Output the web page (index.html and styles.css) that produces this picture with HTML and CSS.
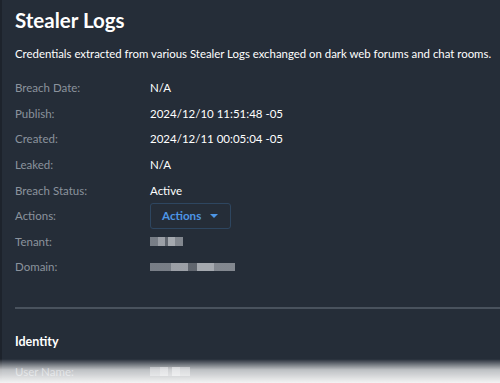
FILE: index.html
```html
<!DOCTYPE html>
<html lang="en">
<head>
    <meta charset="UTF-8">
    <meta name="viewport" content="width=device-width, initial-scale=1.0">
    <title>Stealer Logs</title>
    <link rel="stylesheet" href="styles.css">
</head>
<body>
    <div class="panel">
        <h1>Stealer Logs</h1>
        <p class="desc">Credentials extracted from various Stealer Logs exchanged on dark web forums and chat rooms.</p>

        <div class="fields">
            <span class="label">Breach Date:</span><span class="value">N/A</span>
            <span class="label">Publish:</span><span class="value">2024/12/10 11:51:48 -05</span>
            <span class="label">Created:</span><span class="value">2024/12/11 00:05:04 -05</span>
            <span class="label">Leaked:</span><span class="value">N/A</span>
            <span class="label">Breach Status:</span><span class="value">Active</span>
            <span class="label">Actions:</span>
            <span class="value"><button class="actions">Actions <span class="caret"></span></button></span>
            <span class="label">Tenant:</span><span class="value"><span class="blur tenant"></span></span>
            <span class="label">Domain:</span><span class="value"><span class="blur domain"></span></span>
        </div>

        <hr class="divider">

        <h2>Identity</h2>
        <div class="fields">
            <span class="label">User Name:</span><span class="value"><span class="blur user"></span></span>
        </div>
    </div>
    <div class="fade"></div>
</body>
</html>
```

FILE: styles.css
```css
body {
    margin: 0;
    background-color: #252d38;
    font-family: Lato, "Open Sans", sans-serif;
    color: #ffffff;
    height: 383px;
    overflow: hidden;
    border-left: 2px solid #1d232c;
}

.panel {
    padding: 7px 0 0 13px;
}

h1 {
    margin: 0;
    font-size: 20.5px;
    font-weight: 700;
    line-height: 26px;
}

.desc {
    margin: 13px 0 13px 0;
    font-size: 11.4px;
    line-height: 16px;
}

.fields {
    display: grid;
    grid-template-columns: 135px 1fr;
    grid-auto-rows: 25.6px;
    align-items: center;
    font-size: 11.5px;
}

.label {
    color: #8b939d;
}

.value {
    display: flex;
    align-items: center;
}

.actions {
    display: flex;
    align-items: center;
    gap: 9px;
    height: 26px;
    padding: 0 12px 0 11px;
    background: transparent;
    border: 1px solid #2e4660;
    border-radius: 3px;
    color: #4d96e6;
    font-family: Lato, "Open Sans", sans-serif;
    font-size: 11.6px;
    font-weight: 700;
}

.caret {
    width: 0;
    height: 0;
    border-left: 4px solid transparent;
    border-right: 4px solid transparent;
    border-top: 4px solid #4d96e6;
}

.blur {
    display: inline-block;
    height: 9px;
    background: linear-gradient(90deg, #8d929a 0 25%, #b9bcc2 25% 45%, #6f747c 45% 55%, #c5c8cd 55% 75%, #9a9ea5 75% 100%);
    opacity: 0.8;
}

.tenant { width: 33px; }
.domain { width: 85px; height: 8px; }
.user { width: 40px; }

.divider {
    margin: 27px 0 0 0;
    border: none;
    border-top: 2px solid #49525d;
}

h2 {
    margin: 25px 0 9px 0;
    font-size: 12.5px;
    font-weight: 700;
    line-height: 16px;
}

.fade {
    position: fixed;
    left: 0;
    right: 0;
    bottom: 0;
    height: 24px;
    background: linear-gradient(180deg, rgba(255, 255, 255, 0) 0%, rgba(255, 255, 255, 0.7) 45%, rgba(255, 255, 255, 0.95) 100%);
}
```
